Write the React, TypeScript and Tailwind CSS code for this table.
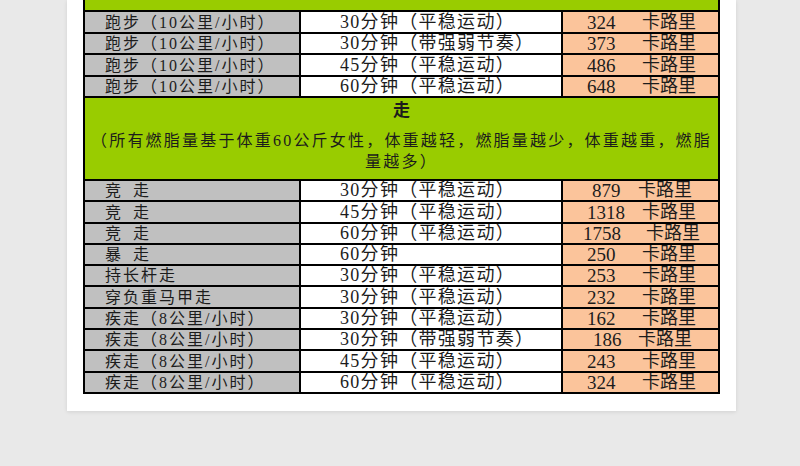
type Row = {
  name: string;
  time: string;
  kcal: string;
  numCls: string;
};

const running: Row[] = [
  { name: "跑步（10公里/小时）", time: "30分钟（平稳运动）", kcal: "324", numCls: "ml-[24px] w-[55px]" },
  { name: "跑步（10公里/小时）", time: "30分钟（带强弱节奏）", kcal: "373", numCls: "ml-[24px] w-[55px]" },
  { name: "跑步（10公里/小时）", time: "45分钟（平稳运动）", kcal: "486", numCls: "ml-[24px] w-[55px]" },
  { name: "跑步（10公里/小时）", time: "60分钟（平稳运动）", kcal: "648", numCls: "ml-[24px] w-[55px]" },
];

const walking: Row[] = [
  { name: "竞\u2002走", time: "30分钟（平稳运动）", kcal: "879", numCls: "ml-[29px] w-[46px]" },
  { name: "竞\u2002走", time: "45分钟（平稳运动）", kcal: "1318", numCls: "ml-[24px] w-[55px]" },
  { name: "竞\u2002走", time: "60分钟（平稳运动）", kcal: "1758", numCls: "ml-[20px] w-[63px]" },
  { name: "暴\u2002走", time: "60分钟", kcal: "250", numCls: "ml-[24px] w-[55px]" },
  { name: "持长杆走", time: "30分钟（平稳运动）", kcal: "253", numCls: "ml-[24px] w-[55px]" },
  { name: "穿负重马甲走", time: "30分钟（平稳运动）", kcal: "232", numCls: "ml-[24px] w-[55px]" },
  { name: "疾走（8公里/小时）", time: "30分钟（平稳运动）", kcal: "162", numCls: "ml-[24px] w-[55px]" },
  { name: "疾走（8公里/小时）", time: "30分钟（带强弱节奏）", kcal: "186", numCls: "ml-[30px] w-[45px]" },
  { name: "疾走（8公里/小时）", time: "45分钟（平稳运动）", kcal: "243", numCls: "ml-[24px] w-[55px]" },
  { name: "疾走（8公里/小时）", time: "60分钟（平稳运动）", kcal: "324", numCls: "ml-[24px] w-[55px]" },
];

function DataRow({ row, h }: { row: Row; h: string }) {
  return (
    <div className={`flex border-t-2 border-black ${h}`}>
      <div className="flex w-[216px] items-end overflow-hidden border-r-2 border-black bg-[#c0c0c0] pl-[20px] text-[16px] leading-[18px] tracking-[2px] whitespace-pre">
        {row.name}
      </div>
      <div className="flex w-[262px] items-end overflow-hidden border-r-2 border-black bg-white pl-[39px] text-[18px] leading-[19px] tracking-[1.3px] whitespace-pre">
        {row.time}
      </div>
      <div className="flex flex-1 items-end overflow-hidden bg-[#fbc49b] text-[18px] leading-[19px]">
        <span className={`${row.numCls} text-[19px]`}>{row.kcal}</span>
        <span>卡路里</span>
      </div>
    </div>
  );
}

export default function App() {
  return (
    <div
      className="h-[466px] w-[800px] overflow-hidden bg-[#e9e9e9] text-[#1c1c1c]"
      style={{ fontFamily: '"Liberation Serif", "Noto Sans CJK SC", serif' }}
    >
      <div className="ml-[67px] h-[411px] w-[669px] bg-white pl-[16px] shadow-[0_1px_4px_rgba(0,0,0,0.10)]">
        <div className="w-[637px] border-x-2 border-b-2 border-black">
          <div className="h-[10px] bg-[#99cc00]" />
          {running.map((r, i) => (
            <DataRow key={i} row={r} h="h-[21.5px]" />
          ))}
          <div className="flex h-[83px] flex-col items-center border-t-2 border-black bg-[#99cc00] pt-[1px]">
            <div
              className="text-[17px] leading-[20px] font-bold"
              style={{ fontFamily: '"Noto Sans CJK SC", sans-serif' }}
            >
              走
            </div>
            <div className="mt-[11px] text-center text-[16px] leading-[21px] tracking-[2.2px]">
              （所有燃脂量基于体重60公斤女性，体重越轻，燃脂量越少，体重越重，燃脂
              <br />
              量越多）
            </div>
          </div>
          {walking.map((r, i) => (
            <DataRow key={i} row={r} h="h-[21.3px]" />
          ))}
        </div>
      </div>
    </div>
  );
}
